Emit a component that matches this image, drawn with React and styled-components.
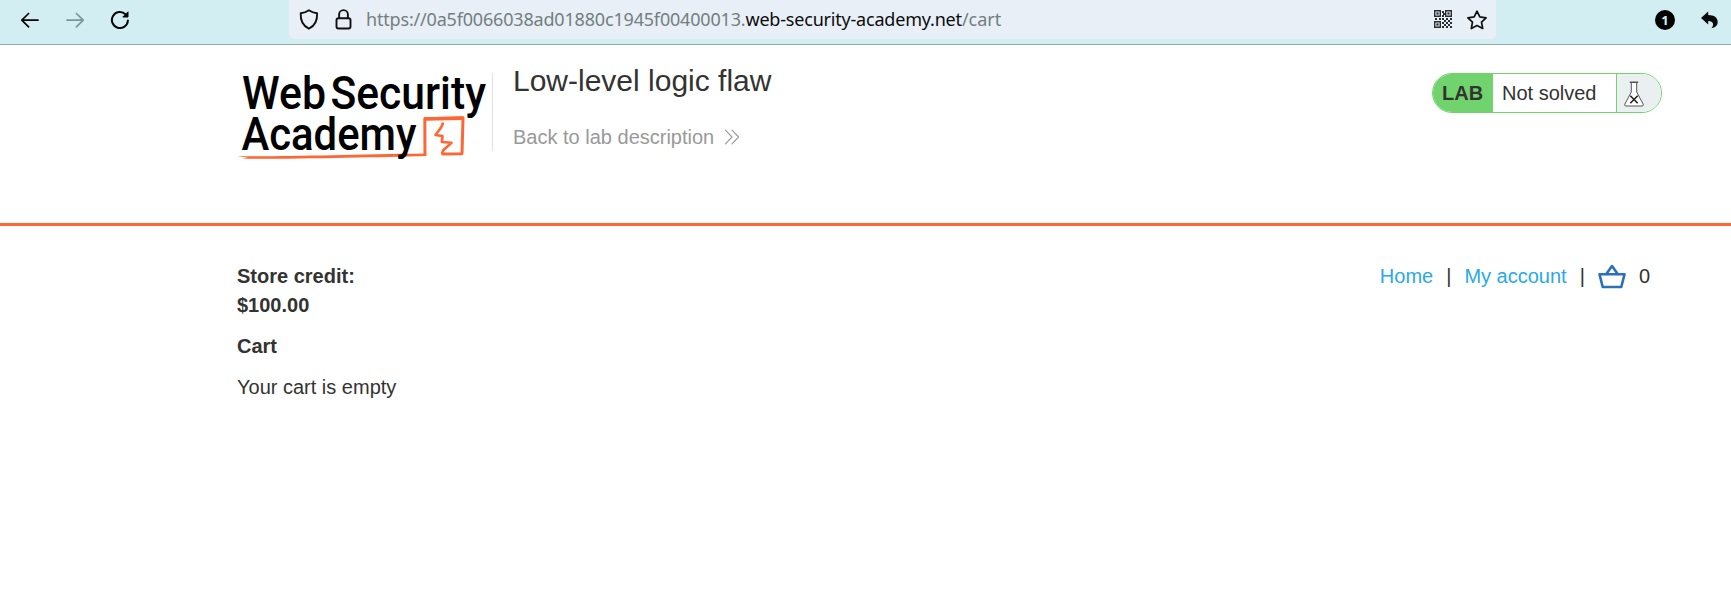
import React from "react";
import styled, { createGlobalStyle } from "styled-components";

const GlobalStyle = createGlobalStyle`
  * { box-sizing: border-box; }
  html, body { margin: 0; padding: 0; background: #fff; }
  body {
    font-family: "Liberation Sans", Arial, sans-serif;
    font-size: 20px;
    color: #333332;
    overflow: hidden;
  }
  svg { display: block; flex: none; }
`;

const Page = styled.div`
  min-height: 598px;
  display: flex;
  flex-direction: column;
`;

const Toolbar = styled.div`
  height: 45px;
  display: flex;
  align-items: flex-start;
  background: #d2eef2;
  border-bottom: 1px solid #94a7a9;
`;

const NavButtons = styled.div`
  width: 289px;
  height: 39px;
  padding-left: 20px;
  display: flex;
  align-items: center;
  gap: 25px;
`;

const AddressBar = styled.div`
  width: 1207px;
  height: 39px;
  padding: 0 8px 0 9px;
  display: flex;
  align-items: center;
  background: #e8eff6;
  border-radius: 0 0 5px 5px;
`;

const AddressIcons = styled.div`
  display: flex;
  gap: 15px;
  width: 68px;
`;

const Url = styled.div`
  flex: 1;
  display: flex;
  font-family: "Noto Sans", sans-serif;
  font-size: 18px;
  line-height: 39px;
  white-space: nowrap;
  color: #72807f;
`;

const UrlPart = styled.span`
  letter-spacing: ${(p) => p.$spacing || 0}px;
  color: ${(p) => (p.$strong ? "#0c0c0d" : "inherit")};
`;

const BarActions = styled.div`
  display: flex;
  gap: 14px;
`;

const Extensions = styled.div`
  flex: 1;
  height: 39px;
  display: flex;
  align-items: center;
  justify-content: flex-end;
  gap: 25px;
  padding-right: 12px;
`;

const Count = styled.span`
  width: 20px;
  height: 20px;
  border-radius: 50%;
  background: #000;
  color: #d2eef2;
  font: 700 13px/20px "Noto Sans", sans-serif;
  text-align: center;
`;

const Header = styled.header`
  height: 181px;
  padding: 0 69px 0 237px;
  display: flex;
  align-items: flex-start;
  border-bottom: 3px solid #ff6633;
`;

const LogoText = styled.text`
  font-family: Roboto, sans-serif;
  font-weight: 500;
  font-size: 46.5px;
  fill: #000;
`;

const LogoBox = styled.div`
  width: 256px;
  height: 78px;
  margin-top: 28px;
  border-right: 1px solid #e0e0e0;
  svg { overflow: visible; }
`;

const Titles = styled.div`
  flex: 1;
  padding: 19px 0 0 20px;
`;

const Title = styled.h2`
  margin: 0;
  font-size: 30px;
  font-weight: 400;
  line-height: 34px;
`;

const BackLink = styled.a`
  display: flex;
  align-items: center;
  gap: 10px;
  margin-top: 27px;
  line-height: 24px;
  color: #999;
`;

const Status = styled.div`
  display: flex;
  width: 230px;
  height: 40px;
  margin-top: 28px;
  border: 1px solid #71d36e;
  border-radius: 20px;
  overflow: hidden;
  line-height: 38px;
`;

const StatusLabel = styled.strong`
  width: 60px;
  padding-left: 9px;
  background: #71d36e;
`;

const StatusText = styled.span`
  flex: 1;
  padding-left: 9px;
`;

const StatusIcon = styled.span`
  width: 45px;
  padding: 7px 0 0 7px;
  border-left: 1px solid #71d36e;
  background: #eaeff2;
`;

const Content = styled.main`
  display: flex;
  justify-content: space-between;
  align-items: flex-start;
  padding: 36px 81px 0 237px;
`;

const Cart = styled.section`
  line-height: 28.6px;
`;

const Line = styled.p`
  margin: 0 0 12.5px;
  font-weight: ${(p) => (p.$bold ? 700 : 400)};
`;

const Nav = styled.nav`
  display: flex;
  align-items: center;
  gap: 13px;
  line-height: 29px;
`;

const Link = styled.a`
  color: #29a9e8;
`;

const Stroke = ({ children, color = "#111", w = 20, h = 20, sw = 1.7 }) => (
  <svg width={w} height={h} viewBox={`0 0 ${w} ${h}`} fill="none" stroke={color}
    strokeWidth={sw} strokeLinecap="round" strokeLinejoin="round">
    {children}
  </svg>
);

const Arrow = ({ color, flip }) => (
  <Stroke color={color}>
    <path d={flip ? "M2 10.2H18M11.4 3.5L18.2 10.2L11.4 16.9" : "M18 10.2H2M8.6 3.5L1.8 10.2L8.6 16.9"} />
  </Stroke>
);

const qrDots = [
  [8, 1], [9, 3], [8, 5], [1, 8], [5, 8], [8, 8],
  [10, 10], [14, 10], [12, 8], [16, 8], [12, 12], [16, 12],
  [10, 14], [14, 14], [12, 16], [16, 16], [8, 12], [8, 16],
];

const QrIcon = () => (
  <svg width="18" height="18" viewBox="0 0 18 18" fill="#2a2d30">
    {[[0, 0], [11, 0], [0, 11]].map(([x, y]) => (
      <g key={`${x}-${y}`}>
        <path fillRule="evenodd" d={`M${x} ${y}h7v7h-7zM${x + 1.4} ${y + 1.4}v4.2h4.2v-4.2z`} />
        <rect x={x + 2.4} y={y + 2.4} width="2.2" height="2.2" />
      </g>
    ))}
    {qrDots.map(([x, y]) => (
      <rect key={`${x}-${y}`} x={x} y={y} width="2" height="2" />
    ))}
  </svg>
);

const Logo = () => (
  <svg width="250" height="90" viewBox="237 73 250 90">
    <g fill="none" stroke="#ff6633" strokeLinejoin="round">
      <path d="M425 156L424.8 118.8L463 117.8L462 153.8L441.5 154" strokeWidth="3" />
      <path d="M424 119L463 118.2" strokeWidth="3.6" />
      <path d="M443 122.5C442.5 127 439 130 435.5 135L442.5 136L441.8 142L451.5 142.8L443 150.5L442 154" strokeWidth="2.6" />
    </g>
    <path d="M237.5 156.2C280 157 350 154.5 426 153.6L426 156C380 157.2 300 159 242 158.8L248 157.8Z" fill="#ff6633" />
    <LogoText x="242" y="109" textLength="84" lengthAdjust="spacingAndGlyphs">Web</LogoText>
    <LogoText x="330.5" y="109" textLength="155.5" lengthAdjust="spacingAndGlyphs">Security</LogoText>
    <LogoText x="241.5" y="150" textLength="175" lengthAdjust="spacingAndGlyphs">Academy</LogoText>
  </svg>
);

export default function App() {
  return (
    <Page>
      <GlobalStyle />
      <Toolbar>
        <NavButtons>
          <Arrow color="#050505" />
          <Arrow color="#809497" flip />
          <Stroke color="#050505" sw={2}>
            <path d="M17.9 10.5A8 8 0 1 1 15.5 4.3" />
            <path d="M18 2.2V7H13.2Z" fill="#050505" strokeWidth="1" />
          </Stroke>
        </NavButtons>
        <AddressBar>
          <AddressIcons>
            <Stroke w={21} h={21} sw={1.9}>
              <path d="M10.9 1.2C13.5 3 16.4 4 19.1 4.3C19.4 11 17.3 16.8 10.9 19.7C4.5 16.8 2.4 11 2.7 4.3C5.4 4 8.3 3 10.9 1.2Z" />
            </Stroke>
            <Stroke w={18} h={21} sw={1.9}>
              <rect x="2.5" y="9.3" width="14" height="10.2" rx="2" />
              <path d="M5.1 9V5.5A4.4 4.4 0 0 1 13.9 5.5V9" />
            </Stroke>
          </AddressIcons>
          <Url>
            <UrlPart $spacing={-0.18}>https://0a5f0066038ad01880c1945f00400013.</UrlPart>
            <UrlPart $spacing={-0.2} $strong>web-security-academy.net</UrlPart>
            <UrlPart>/cart</UrlPart>
          </Url>
          <BarActions>
            <QrIcon />
            <Stroke w={22} h={20} sw={1.7}>
              <path d="M11 1.2L13.8 6.9L20.1 7.8L15.5 12.2L16.7 18.5L11 15.5L5.3 18.5L6.5 12.2L1.9 7.8L8.2 6.9Z" />
            </Stroke>
          </BarActions>
        </AddressBar>
        <Extensions>
          <Count>1</Count>
          <svg width="19" height="18" viewBox="0 0 19 18">
            <path d="M1 7L8.2 0.6V4.1C14 4.2 17.7 6.5 17.7 11C17.7 14.2 15.5 16.5 11.4 17.2C14.3 14 13.7 10.2 8.2 10.1V13.4Z" fill="#0a0a0a" />
          </svg>
        </Extensions>
      </Toolbar>
      <Header>
        <LogoBox><Logo /></LogoBox>
        <Titles>
          <Title>Low-level logic flaw</Title>
          <BackLink>
            Back to lab description
            <Stroke color="#999" w={16} h={16} sw={1.1}>
              <path d="M1.4 1.2L8 8L1.4 14.8M8 1.2L14.6 8L8 14.8" />
            </Stroke>
          </BackLink>
        </Titles>
        <Status>
          <StatusLabel>LAB</StatusLabel>
          <StatusText>Not solved</StatusText>
          <StatusIcon>
            <svg width="20" height="26" viewBox="0 0 20 26" fill="none" stroke="#555" strokeWidth="1">
              <path d="M7.3 1.5V11L0.8 23.2Q0.3 25 2 25H18Q19.7 25 19.2 23.2L12.7 11V1.5" fill="#fff" />
              <path d="M5.8 1.2H14.2" strokeWidth="1.4" />
              <path d="M6.3 14.8L13.7 22.2M13.7 14.8L6.3 22.2" stroke="#222" strokeWidth="1.6" />
            </svg>
          </StatusIcon>
        </Status>
      </Header>
      <Content>
        <Cart>
          <Line $bold>Store credit:<br />$100.00</Line>
          <Line $bold>Cart</Line>
          <Line>Your cart is empty</Line>
        </Cart>
        <Nav>
          <Link>Home</Link>
          <span>|</span>
          <Link>My account</Link>
          <span>|</span>
          <Stroke color="#2b70b8" w={28} h={25} sw={2.6}>
            <path d="M1.5 10.2H26.5L23.3 23H4.7Z" />
            <path d="M8.3 10L14 2L19.7 10" />
          </Stroke>
          <span>0</span>
        </Nav>
      </Content>
    </Page>
  );
}
